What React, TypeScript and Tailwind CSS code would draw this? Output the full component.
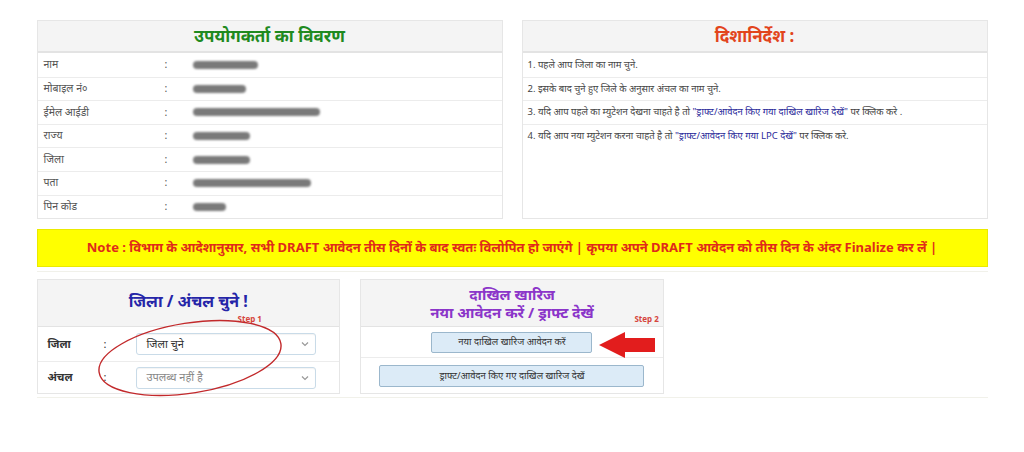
import React from 'react'

const userRows = [
  { label: 'नाम', w: 65 },
  { label: 'मोबाइल नं०', w: 53 },
  { label: 'ईमेल आईडी', w: 127 },
  { label: 'राज्य', w: 57 },
  { label: 'जिला', w: 57 },
  { label: 'पता', w: 118 },
  { label: 'पिन कोड', w: 33 },
]

function Blurred({ w }: { w: number }) {
  return <div className="h-[8px] rounded-sm bg-[#7a7a7a] blur-[1px]" style={{ width: w }} />
}

function UserCard() {
  return (
    <div className="border border-[#e6e6e6] bg-white">
      <div className="flex h-[32px] items-center justify-center border-b-2 border-[#e3e3e3] bg-[#f4f4f4]">
        <h2 className="text-[17px] font-bold text-[#1f8a1f]">उपयोगकर्ता का विवरण</h2>
      </div>
      {userRows.map((r, i) => (
        <div
          key={r.label}
          className={`flex h-[23.6px] items-center text-[10.5px] text-[#555] ${i > 0 ? 'border-t border-[#ececec]' : ''}`}
        >
          <span className="w-[127px] pl-[6px]">{r.label}</span>
          <span className="w-[28px]">:</span>
          <Blurred w={r.w} />
        </div>
      ))}
    </div>
  )
}

function GuideCard() {
  return (
    <div className="border border-[#e6e6e6] bg-white">
      <div className="flex h-[32px] items-center justify-center border-b-2 border-[#e3e3e3] bg-[#f4f4f4]">
        <h2 className="text-[17px] font-bold text-[#e2441c]">दिशानिर्देश :</h2>
      </div>
      <div className="text-[9.5px] text-[#444]">
        <div className="flex h-[23.5px] items-center pl-[5px]">1. पहले आप जिला का नाम चुने.</div>
        <div className="flex h-[23.5px] items-center border-t border-[#ececec] pl-[5px]">
          2. इसके बाद चुने हुए जिले के अनुसार अंचल का नाम चुने.
        </div>
        <div className="flex h-[23.5px] items-center border-t border-[#ececec] pl-[5px]">
          3. यदि आप पहले का म्युटेशन देखना चाहते है तो&nbsp;
          <span className="text-[#2a2a9a]">"ड्राफ्ट/आवेदन किए गया दाखिल खारिज देखें"</span>
          &nbsp;पर क्लिक करे .
        </div>
        <div className="flex h-[23.5px] items-center border-t border-[#ececec] pl-[5px]">
          4. यदि आप नया म्युटेशन करना चाहते है तो&nbsp;
          <span className="text-[#2a2a9a]">"ड्राफ्ट/आवेदन किए गया LPC देखें"</span>
          &nbsp;पर क्लिक करे.
        </div>
      </div>
    </div>
  )
}

function Select({ value, muted }: { value: string; muted?: boolean }) {
  return (
    <div className="flex h-[22px] w-[180px] items-center justify-between rounded-[3px] border border-[#c9dbe8] bg-white pl-[10px] pr-[6px] shadow-[inset_0_1px_1px_rgba(0,0,0,0.05)]">
      <span className={`text-[11px] font-normal ${muted ? 'text-[#888]' : 'text-[#333]'}`}>{value}</span>
      <svg width="8" height="6" viewBox="0 0 8 6" className="text-[#999]">
        <path d="M1 1.5 L4 4.5 L7 1.5" fill="none" stroke="currentColor" strokeWidth="1.2" />
      </svg>
    </div>
  )
}

function DistrictCard() {
  return (
    <div className="relative border border-[#e6e6e6] bg-white">
      <div className="relative flex h-[47px] items-center justify-center border-b border-[#e3e3e3] bg-[#f4f4f4]">
        <h2 className="mb-[4px] text-[16px] font-bold text-[#2525a8]">जिला / अंचल चुने !</h2>
        <span className="absolute bottom-[1px] left-[200px] text-[8px] font-bold text-[#d6453d]">Step 1</span>
      </div>
      <div className="flex h-[35px] items-center border-b border-[#ececec] text-[11px] font-bold text-[#333]">
        <span className="w-[66px] pl-[10px]">जिला</span>
        <span className="w-[32px] font-normal">:</span>
        <Select value="जिला चुने" />
      </div>
      <div className="flex h-[31px] items-center text-[11px] font-bold text-[#333]">
        <span className="w-[66px] pl-[10px]">अंचल</span>
        <span className="w-[32px] font-normal">:</span>
        <Select value="उपलब्ध नहीं है" muted />
      </div>
      <svg className="pointer-events-none absolute left-[56px] top-[28px]" width="200" height="100" viewBox="0 0 200 100">
        <ellipse cx="96" cy="50" rx="92" ry="35" transform="rotate(-9 96 50)" fill="none" stroke="#c2292b" strokeWidth="1.4" />
      </svg>
    </div>
  )
}

function MutationCard() {
  return (
    <div className="relative border border-[#e6e6e6] bg-white">
      <div className="relative flex h-[47px] flex-col items-center justify-center border-b border-[#e3e3e3] bg-[#f4f4f4] text-[15px] font-bold leading-[18px] text-[#8b35c9]">
        <span>दाखिल खारिज</span>
        <span>नया आवेदन करें / ड्राफ्ट देखें</span>
        <span className="absolute bottom-[3px] right-[4px] text-[8px] leading-none text-[#d6453d]">Step 2</span>
      </div>
      <div className="flex h-[31px] items-center justify-center border-b border-[#ececec]">
        <button className="h-[21px] w-[161px] rounded-[2px] border border-[#9bb7cc] bg-[#dcebf7] text-[9.5px] text-[#333]">
          नया दाखिल खारिज आवेदन करें
        </button>
      </div>
      <div className="flex h-[35px] items-center justify-center">
        <button className="h-[22px] w-[265px] rounded-[2px] border border-[#9bb7cc] bg-[#dcebf7] text-[9.5px] text-[#333]">
          ड्राफ्ट/आवेदन किए गए दाखिल खारिज देखें
        </button>
      </div>
      <svg className="pointer-events-none absolute left-[237px] top-[51px]" width="58" height="28" viewBox="0 0 58 28">
        <path d="M1 14 L27 1 L27 7 L57 7 L57 21 L27 21 L27 27 Z" fill="#e21d1d" />
      </svg>
    </div>
  )
}

export default function App() {
  return (
    <div className="min-h-[452px] bg-white font-['Noto_Sans','Liberation_Sans',sans-serif]">
      <div className="mx-auto w-[951px] pt-[20px]">
        <div className="grid grid-cols-2 gap-[19px]">
          <UserCard />
          <GuideCard />
        </div>
        <div className="mt-[10px] flex h-[38px] items-center justify-center border border-[#eaea00] bg-[#ffff00]">
          <p className="text-[13px] font-bold text-[#e02a1a]">
            Note : विभाग के आदेशानुसार, सभी DRAFT आवेदन तीस दिनों के बाद स्वतः विलोपित हो जाएंगे | कृपया अपने DRAFT आवेदन को तीस दिन के अंदर Finalize कर लें |
          </p>
        </div>
        <div className="mt-[4px] border-t border-b border-[#f1f1ea] pb-[3px] pt-[7px]">
          <div className="grid grid-cols-3 gap-[20px]">
            <DistrictCard />
            <MutationCard />
            <div />
          </div>
        </div>
      </div>
    </div>
  )
}
